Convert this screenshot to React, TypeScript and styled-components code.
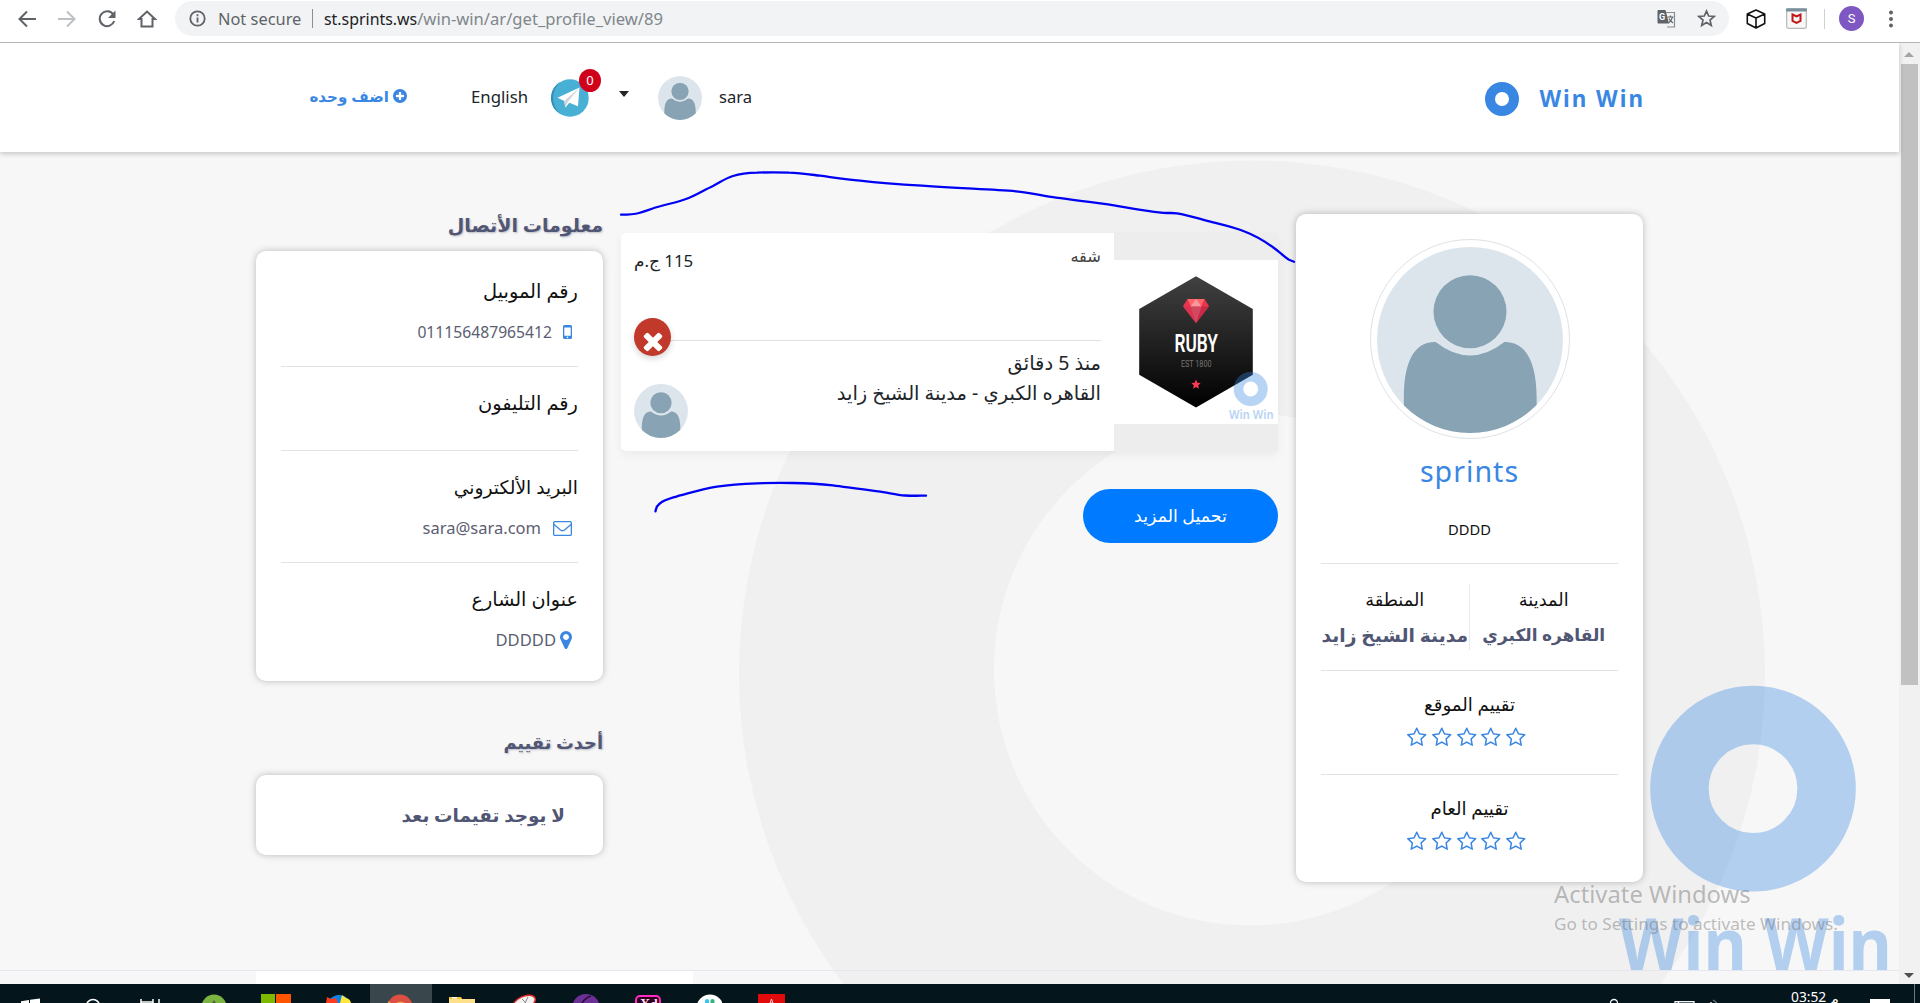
import React from 'react';
import styled, { createGlobalStyle } from 'styled-components';

const BLUE = '#3a87e3';
const INK = '#505673';
const latin = '"Noto Sans", "DejaVu Sans", sans-serif';

const Global = createGlobalStyle`
  * { box-sizing: border-box; }
  html, body { margin: 0; padding: 0; overflow: hidden; }
  body { font-family: ${latin}; background: #f7f7f7; color: #212529; }
  svg { display: block; flex: none; }
`;

const Screen = styled.div`
  width: 1920px;
  height: 1003px;
  display: flex;
  flex-direction: column;
  overflow: hidden;
  position: relative;
`;

/* ---------- browser chrome ---------- */
const Toolbar = styled.div`
  height: 43px;
  flex: none;
  display: flex;
  align-items: flex-start;
  background: #fff;
  border-bottom: 1px solid #b4b5b7;
`;
const NavButtons = styled.div`
  width: 175px;
  height: 37px;
  padding-left: 17px;
  display: flex;
  align-items: center;
  gap: 20px;
`;
const Omnibox = styled.div`
  width: 1554px;
  height: 35px;
  margin-top: 1px;
  border-radius: 18px;
  background: #f1f3f4;
  display: flex;
  align-items: center;
  padding: 0 13px 0 14px;
  white-space: nowrap;
`;
const Security = styled.span`
  margin-left: 12px;
  width: 94px;
  flex: none;
  font-size: 16.4px;
  color: #5f6368;
`;
const Divider = styled.span<{ $h: number; $color: string }>`
  width: 1px;
  height: ${p => p.$h}px;
  background: ${p => p.$color};
`;
const Address = styled.span`
  margin-left: 11px;
  flex: 1;
  font-size: 16.6px;
  color: #80868b;
`;
const Host = styled.span`
  color: #202124;
  font-size: 15.9px;
`;
const OmniIcons = styled.div`
  display: flex;
  align-items: center;
  gap: 21px;
`;
const Extensions = styled.div`
  height: 37px;
  flex: 1;
  display: flex;
  align-items: center;
  padding-left: 17px;
`;
const Account = styled.div`
  width: 25px;
  height: 25px;
  margin: 0 25px 0 14px;
  border-radius: 50%;
  background: #7e57c2;
  color: #fff;
  font: 13px/25px Roboto, sans-serif;
  text-align: center;
`;

/* ---------- page frame ---------- */
const Viewport = styled.div`
  height: 941px;
  flex: none;
  display: flex;
  overflow: hidden;
`;
const Page = styled.div`
  width: 1899px;
  position: relative;
  display: flex;
  flex-direction: column;
  background: #f7f7f7;
`;
const Backdrop = styled.svg`
  position: absolute;
  left: 0;
  top: 0;
`;
const Scrollbar = styled.div`
  width: 21px;
  background: #f1f1f1;
  display: flex;
  flex-direction: column;
  align-items: center;
  justify-content: space-between;
  padding-bottom: 6px;
  padding-right: 1px;
`;
const ScrollTop = styled.div`
  display: flex;
  flex-direction: column;
  align-items: center;
  padding-top: 9px;
  gap: 7px;
`;
const Thumb = styled.div`
  width: 17px;
  height: 621px;
  background: #c1c1c1;
`;

/* ---------- site header ---------- */
const Header = styled.header`
  height: 109px;
  flex: none;
  background: #fff;
  box-shadow: 0 2px 5px rgba(0, 0, 0, 0.2);
  display: flex;
  align-items: center;
  padding: 0 254px 0 309px;
  position: relative;
`;
const AddUnit = styled.a`
  display: flex;
  align-items: center;
  gap: 4px;
  width: 98px;
  padding-bottom: 3px;
  direction: rtl;
  color: ${BLUE};
  font-weight: 700;
  font-size: 15.1px;
  white-space: nowrap;
`;
const Language = styled.span`
  margin: 0 22px 2px 64px;
  font-size: 16.8px;
  width: 58px;
`;
const Messages = styled.div`
  position: relative;
  width: 38px;
  height: 38px;
`;
const Badge = styled.span`
  position: absolute;
  left: 28px;
  top: -10px;
  width: 22px;
  height: 23px;
  border-radius: 50%;
  background: #d0021b;
  color: #fff;
  font-size: 13px;
  line-height: 22px;
  text-align: center;
`;
const Caret = styled.span`
  margin: 0 29px 7px 30px;
  border: 5.5px solid transparent;
  border-top: 6px solid #212529;
  border-bottom: 0;
`;
const UserName = styled.span`
  margin: 0 0 3px 17px;
  font-size: 16.6px;
`;
const Brand = styled.div`
  margin-left: auto;
  display: flex;
  align-items: center;
  gap: 20px;
  color: ${BLUE};
  font-size: 22.4px;
  font-weight: 700;
  letter-spacing: 2px;
  padding-top: 2px;
`;

/* ---------- content ---------- */
const Columns = styled.main`
  display: flex;
  gap: 18px;
  height: 819px;
  flex: none;
  padding: 62px 256px 0;
  border-bottom: 1px solid #e6e7ee;
  position: relative;
`;
const Side = styled.aside`
  width: 347px;
  direction: rtl;
`;
const Center = styled.section`
  width: 657px;
  padding-top: 19px;
`;
const Heading = styled.h2<{ $size: number; $height: number }>`
  margin: 0;
  height: ${p => p.$height}px;
  font-size: ${p => p.$size}px;
  line-height: 23px;
  font-weight: 700;
  color: ${INK};
  text-shadow: 1px 1px 2px rgba(80, 86, 115, 0.35);
`;
const Card = styled.div`
  background: #fff;
  border-radius: 10px;
  box-shadow: 0 0 7px rgba(0, 0, 0, 0.25);
`;
const ContactCard = styled(Card)`
  height: 430px;
  padding: 4px 25px 0;
  margin-bottom: 50px;
`;
const Field = styled.div`
  padding: 21px 0 19px;
  border-bottom: 1px solid #e3e3e4;
  &:last-child { border-bottom: 0; }
`;
const FieldLabel = styled.div<{ $size: number }>`
  font-size: ${p => p.$size}px;
  line-height: 30px;
  color: #111;
`;
const FieldValue = styled.div<{ $size: number; $gap: number }>`
  margin-top: 11px;
  padding-right: 6px;
  min-height: 2px;
  display: flex;
  align-items: center;
  gap: ${p => p.$gap}px;
  font-size: ${p => p.$size}px;
  color: #5b5e72;
  & > span { line-height: 30px; }
`;
const EmptyCard = styled(Card)`
  height: 80px;
  padding-right: 38px;
  line-height: 80px;
  font-size: 18.4px;
  font-weight: 700;
  color: ${INK};
`;

/* ---------- listing ---------- */
const Listing = styled.article`
  height: 218px;
  display: flex;
  border-radius: 5px;
  box-shadow: 0 4px 10px rgba(0, 0, 0, 0.05);
`;
const ListingBody = styled.div`
  width: 493px;
  position: relative;
  padding: 0 13px;
  background: #fff;
  border-radius: 5px 0 0 5px;
`;
const ListingTop = styled.div`
  height: 108px;
  display: flex;
  justify-content: space-between;
  border-bottom: 1px solid #dfe0e1;
`;
const Price = styled.span`
  padding-top: 17px;
  font-size: 16.9px;
  line-height: 22px;
  direction: rtl;
`;
const Kind = styled.span`
  padding-top: 12px;
  font-size: 16.3px;
  line-height: 22px;
  color: #444;
`;
const ListingBottom = styled.div`
  display: flex;
  justify-content: space-between;
  padding-top: 7px;
`;
const ListingInfo = styled.div`
  direction: rtl;
  font-size: 19.5px;
  line-height: 30px;
`;
const OwnerSlot = styled.div`
  padding-top: 36px;
`;
const Remove = styled.button`
  position: absolute;
  left: 13px;
  top: 85px;
  width: 37px;
  height: 38px;
  padding: 7px 0 0;
  border: 0;
  border-radius: 50%;
  background: #c0392b;
  color: #fff;
  display: flex;
  align-items: center;
  justify-content: center;
  box-shadow: 0 3px 6px rgba(0, 0, 0, 0.16);
`;
const Media = styled.div`
  width: 164px;
  display: flex;
  align-items: center;
  background: #ededed;
`;
const LoadMore = styled.button`
  display: block;
  width: 195px;
  height: 54px;
  margin: 38px 0 0 auto;
  padding: 0 0 3px;
  border: 0;
  border-radius: 27px;
  background: #007bff;
  color: #fff;
  font-family: ${latin};
  font-size: 17.4px;
`;

/* ---------- profile ---------- */
const ProfileCard = styled(Card)`
  height: 668px;
  padding: 25px 25px 0;
  display: flex;
  flex-direction: column;
  align-items: center;
`;
const Portrait = styled.div`
  width: 200px;
  height: 200px;
  padding: 7px 6px 6px;
  border: 1px solid #dee2e6;
  border-radius: 50%;
`;
const ProfileName = styled.h1`
  margin: 12px 0 26px;
  font-size: 28.6px;
  line-height: 40px;
  font-weight: 400;
  letter-spacing: 1px;
  color: ${BLUE};
  direction: ltr;
`;
const Bio = styled.p`
  margin: 0 0 22px;
  font-size: 14.7px;
  line-height: 24px;
  color: #111;
`;
const Places = styled.div`
  width: 297px;
  padding: 20px 0;
  display: grid;
  grid-template-columns: 1fr 1fr;
  border-top: 1px solid #e3e3e4;
`;
const Place = styled.div`
  height: 66px;
  text-align: center;
  white-space: nowrap;
  &:last-child { border-right: 1px solid #ebebec; }
`;
const PlaceLabel = styled.div`
  font-size: 17.8px;
  line-height: 30px;
  margin-bottom: 5px;
  color: #111;
`;
const PlaceName = styled.div<{ $size: number }>`
  font-size: ${p => p.$size}px;
  line-height: 31px;
  font-weight: 700;
  color: ${INK};
`;
const Rating = styled.div`
  width: 297px;
  height: 104px;
  padding-top: 20px;
  text-align: center;
  font-size: 18.2px;
  line-height: 26px;
  color: #111;
  border-top: 1px solid #e3e3e4;
`;
const Stars = styled.div`
  display: flex;
  justify-content: center;
  gap: 3.8px;
  margin: 10px 5px 0 0;
  color: ${BLUE};
`;

/* ---------- footer, overlays, taskbar ---------- */
const FooterPanel = styled.div`
  width: 437px;
  height: 13px;
  margin-left: 256px;
  background: #fff;
  position: relative;
`;
const Overlay = styled.svg`
  position: absolute;
  left: 0;
  top: 0;
  pointer-events: none;
`;
const Activation = styled.div`
  position: absolute;
  left: 1554px;
  top: 878px;
  color: rgba(110, 110, 110, 0.45);
  white-space: nowrap;
`;
const ActivationTitle = styled.div`
  font-size: 23.8px;
  line-height: 32px;
`;
const ActivationHint = styled.div`
  font-size: 17.15px;
  line-height: 28px;
`;
const Taskbar = styled.footer`
  height: 19px;
  flex: none;
  display: flex;
  background: #04151b;
  overflow: hidden;
`;
const Task = styled.div<{ $active?: boolean }>`
  width: 61.7px;
  height: 19px;
  flex: none;
  overflow: hidden;
  display: flex;
  justify-content: center;
  background: ${p => (p.$active ? '#39474c' : 'transparent')};
`;
const Tray = styled.div`
  margin-left: auto;
  padding-right: 5px;
  display: flex;
  color: #fff;
`;
const TrayIcons = styled.div`
  padding-right: 74px;
`;
const Clock = styled.div`
  width: 79px;
  display: flex;
  font-size: 13.8px;
  line-height: 19px;
  padding-top: 3px;
  gap: 4px;
  white-space: nowrap;
`;
const Meridiem = styled.span`
  padding-top: 2px;
`;
const Notify = styled.div`
  width: 20px;
  height: 12px;
  margin: 15px 24px 0 0;
  background: #fff;
`;

/* ---------- icons ---------- */
const glyphs = {
  star: 'M1137 1004l306-297-422-62-189-382-189 382-422 62 306 297-73 421 378-199 377 199zm527-357q0 22-26 48l-363 354 86 500q1 7 1 20 0 50-41 50-19 0-40-12l-449-236-449 236q-22 12-40 12-21 0-31.5-14.5t-10.5-35.5q0-6 2-20l86-500-364-354q-25-27-25-48 0-37 56-46l502-73 225-455q19-41 49-41t49 41l225 455 502 73q56 9 56 46z',
  plus: 'M1344 960v-128q0-26-19-45t-45-19h-256v-256q0-26-19-45t-45-19h-128q-26 0-45 19t-19 45v256h-256q-26 0-45 19t-19 45v128q0 26 19 45t45 19h256v256q0 26 19 45t45 19h128q26 0 45-19t19-45v-256h256q26 0 45-19t19-45zm320-64q0 209-103 385.5t-279.5 279.5-385.5 103-385.5-103-279.5-279.5-103-385.5 103-385.5 279.5-279.5 385.5-103 385.5 103 279.5 279.5 103 385.5z',
  pin: 'M1152 640q0-106-75-181t-181-75-181 75-75 181 75 181 181 75 181-75 75-181zm256 0q0 109-33 179l-364 774q-16 33-47.5 52t-67.5 19-67.5-19-46.5-52l-365-774q-33-70-33-179 0-212 150-362t362-150 362 150 150 362z',
  times: 'M1490 1322q0 40-28 68l-136 136q-28 28-68 28t-68-28l-294-294-294 294q-28 28-68 28t-68-28l-136-136q-28-28-28-68t28-68l294-294-294-294q-28-28-28-68t28-68l136-136q28-28 68-28t68 28l294 294 294-294q28-28 68-28t68 28l136 136q28 28 28 68t-28 68l-294 294 294 294q28 28 28 68z',
};
const Glyph = ({ name, w, h = w, box = '128 128 1536 1536' }: { name: keyof typeof glyphs; w: number; h?: number; box?: string }) => (
  <svg width={w} height={h} viewBox={box} fill="currentColor"><path d={glyphs[name]} /></svg>
);

const Avatar = ({ size, id }: { size: number; id: string }) => (
  <svg width={size} height={size} viewBox="0 0 187 187">
    <clipPath id={id}><circle cx="93.5" cy="93.5" r="93.5" /></clipPath>
    <g clipPath={`url(#${id})`}>
      <rect width="187" height="187" fill="#dde5ec" />
      <circle cx="93.5" cy="65" r="36.7" fill="#88a4b4" />
      <path d="M27 187V152C27 118 36 95 59 95.500Q76 109 93.500 109Q111 109 128 95.500C151 95 160.500 118 160.500 152V187Z" fill="#88a4b4" />
    </g>
  </svg>
);

const Ring = () => (
  <svg width="34" height="34" viewBox="0 0 34 34"><circle cx="17" cy="17" r="12" fill="none" stroke={BLUE} strokeWidth="10" /></svg>
);

const Telegram = () => (
  <svg width="38" height="38" viewBox="0 0 38 38">
    <circle cx="19" cy="19" r="18.7" fill="#49b0d5" />
    <path d="M9 3A18.700 18.700 0 0 0 9 35A22 22 0 0 1 9 3Z" fill="#2f8fb4" />
    <path d="M6.500 18.800 28.500 8.500 27 27.200 18.300 23.700 14.300 28.700 13.300 22Z" fill="#fff" />
    <path d="M13.300 22 28.500 8.500 16.300 23.500 14.300 28.700Z" fill="#cfd5da" />
  </svg>
);

const Phone = () => (
  <svg width="9" height="14" viewBox="0 0 9 14">
    <path fillRule="evenodd" fill={BLUE} d="M1.500 0h6A1.500 1.500 0 0 1 9 1.500v11A1.500 1.500 0 0 1 7.500 14h-6A1.500 1.500 0 0 1 0 12.500v-11A1.500 1.500 0 0 1 1.500 0ZM1.300 2.500v8.300h6.400V2.500ZM4.500 11.600a.8.800 0 1 0 0 1.600.8.800 0 1 0 0-1.600Z" />
  </svg>
);
const Envelope = () => (
  <svg width="19" height="15" viewBox="0 0 19 15" fill="none" stroke={BLUE} strokeWidth="1.300">
    <rect x=".65" y=".65" width="17.700" height="13.700" rx="1.200" />
    <path d="M.8 3.200 7.500 8.900Q9.500 10.400 11.500 8.900L18.200 3.200" />
  </svg>
);

const RubyBadge = () => (
  <svg width="164" height="164" viewBox="0 0 164 164">
    <defs>
      <linearGradient id="hex" x1="0" y1="0" x2="0" y2="1">
        <stop offset="0" stopColor="#414141" /><stop offset="1" stopColor="#000" />
      </linearGradient>
    </defs>
    <rect width="164" height="164" fill="#fff" />
    <path d="M82 16.300 138.800 49V114.700L82 147.400 25.200 114.700V49Z" fill="url(#hex)" />
    <path d="M73.500 39h17L95 46 82 63 69 46Z" fill="#e8354f" />
    <path d="M73.500 39h17L87 46.500H77Z" fill="#ff6468" />
    <path d="M82 39 87.500 46.500h-11Z" fill="#f79a9c" />
    <path d="M69 46.500H76.500L82 63Z" fill="#d9334d" /><path d="M95 46.500H87.500L82 63Z" fill="#c92b47" />
    <path d="M76.500 46.500h11L82 63Z" fill="#d24860" />
    <text x="60.500" y="92" fontFamily="Roboto, sans-serif" fontWeight="600" fontSize="26.500" fill="#fff" textLength="43.500" lengthAdjust="spacingAndGlyphs">RUBY</text>
    <text x="67" y="107" fontFamily="Roboto, sans-serif" fontSize="9.800" fill="#777" textLength="30.500" lengthAdjust="spacingAndGlyphs">EST 1800</text>
    <path d="M82 119.500 83.400 122.700 86.600 123 84.200 125.400 84.900 128.800 82 127.100 79.100 128.800 79.800 125.400 77.400 123 80.600 122.700Z" fill="#ff3b52" />
    <circle cx="136.700" cy="129" r="12.200" fill="none" stroke="#3a87e3" strokeOpacity=".36" strokeWidth="9.600" />
    <text x="115" y="158.500" fontFamily={latin} fontWeight="700" fontSize="12" fill="#3a87e3" fillOpacity=".36" textLength="44.500" lengthAdjust="spacingAndGlyphs">Win Win</text>
  </svg>
);

const FiveStars = () => (
  <Stars>{[0, 1, 2, 3, 4].map(i => <Glyph key={i} name="star" w={21} box="0 0 1792 1792" />)}</Stars>
);

const taskIcons: React.ReactNode[] = [
  <svg width="22" height="19"><path d="M1 17.300 9 16v8H1ZM10 15.800 20 14.500V24H10Z" fill="#fff" /></svg>,
  <svg width="20" height="19"><circle cx="10" cy="22" r="6.500" fill="none" stroke="#fff" strokeWidth="1.500" /></svg>,
  <svg width="30" height="19"><path d="M2 15v5M2 18h12M14 15v5M20 15v5" fill="none" stroke="#fff" strokeWidth="1.500" /></svg>,
  <svg width="30" height="19"><circle cx="13" cy="23" r="12.500" fill="#7cb342" /><path d="m11 19 2-3 2 3Z" fill="#50652f" /></svg>,
  <svg width="34" height="19"><path d="M0 10h14v9H0Z" fill="#7eb900" /><path d="M15 10h15v9H15Z" fill="#ff5400" /></svg>,
  <svg width="28" height="19"><circle cx="14" cy="23" r="12" fill="#0d85e8" /><path d="m1 19 1-6 4 2 5-1 2 5Z" fill="#ff3b1f" /><path d="m15 19 2-8 4 3q5 1 5 6Z" fill="#ffe63b" /></svg>,
  <svg width="28" height="19"><circle cx="13" cy="23" r="12.500" fill="#dd4f42" /><path d="M1 19V17l3 2M9 19q4-3 9 0Z" fill="#e9a64d" /></svg>,
  <svg width="30" height="19"><path d="M1 13h12l1 2h13v5H1Z" fill="#ffe08a" /><path d="M1 13h12v2H1Z" fill="#f6c437" /><path d="M4 13h5v1.500H4Z" fill="#fff" /></svg>,
  <svg width="28" height="19"><ellipse cx="14" cy="19" rx="12" ry="6.500" transform="rotate(-25 14 19)" fill="#f2f2f2" stroke="#e02b2b" strokeWidth="1.500" /><path d="m12 15 4 4M18 13l-3 6" stroke="#888" /></svg>,
  <svg width="28" height="19"><circle cx="14" cy="24" r="14" fill="#6b2f95" /><path d="M10 19q3-5 9-7" fill="none" stroke="#241038" strokeWidth="1.500" /></svg>,
  <svg width="26" height="19"><rect x="1" y="12" width="24" height="24" rx="4" fill="#2e001e" stroke="#ff2bc2" strokeWidth="2" /><text x="5" y="25" fill="#ffd9f3" fontFamily="Liberation Serif, serif" fontWeight="700" fontSize="14">Xd</text></svg>,
  <svg width="26" height="19"><circle cx="14" cy="24" r="13.500" fill="#fff" /><rect x="9" y="15" width="4" height="6" rx="2" fill="#36c5f0" /><rect x="14.500" y="15" width="4" height="6" rx="2" fill="#2eb67d" /></svg>,
  <svg width="27" height="19"><path d="M0 10h27v9H0Z" fill="#e20a0a" /><path d="m13.500 15-1.500 4h3Z" fill="none" stroke="#fff" strokeWidth=".8" /></svg>,
];

export default function App() {
  return (
    <Screen>
      <Global />
      <Toolbar>
        <NavButtons>
          <svg width="20" height="20" viewBox="0 0 20 20" fill="none" stroke="#5f6368" strokeWidth="2"><path d="M19 10H3M10 2.500 2.500 10 10 17.500" /></svg>
          <svg width="20" height="20" viewBox="0 0 20 20" fill="none" stroke="#bdc1c6" strokeWidth="2"><path d="M1 10H17M10 2.500 17.500 10 10 17.500" /></svg>
          <svg width="20" height="20" viewBox="0 0 20 20"><path d="M16.300 5.600A7.400 7.400 0 1 0 17.200 12" fill="none" stroke="#5f6368" strokeWidth="2" /><path d="M18.500 1.500V9H11Z" fill="#5f6368" /></svg>
          <svg width="20" height="20" viewBox="0 0 20 20" fill="none" stroke="#5f6368" strokeWidth="2"><path d="M4.500 17.500V10H2L10 2.500 18 10H15.500V17.500Z" /></svg>
        </NavButtons>
        <Omnibox>
          <svg width="17" height="17" viewBox="0 0 17 17"><circle cx="8.500" cy="8.500" r="7.200" fill="none" stroke="#5f6368" strokeWidth="1.800" /><path d="M7.600 7.500h1.800v5H7.600zM7.600 4.300h1.800v1.900H7.600z" fill="#5f6368" /></svg>
          <Security>Not secure</Security>
          <Divider $h={19} $color="#8b8f93" />
          <Address><Host>st.sprints.ws</Host>/win-win/ar/get_profile_view/89</Address>
          <OmniIcons>
            <svg width="19" height="19" viewBox="0 0 19 19">
              <path d="M7 3.500h10.500V18H10" fill="#f1f3f4" stroke="#8a8d91" strokeWidth="1.200" />
              <path d="M1.500 1H8.500L12 14.500H1.500A1 1 0 0 1 .5 13.500V2A1 1 0 0 1 1.500 1Z" fill="#5f6368" />
              <text x="2" y="11" fontFamily="Roboto, sans-serif" fontWeight="700" fontSize="9" fill="#fff">G</text>
              <path d="M10.500 8H16.500M13.500 6.500V8M15.500 8Q14.500 12 11.500 14M12 9.500Q13 12 16 14" fill="none" stroke="#5f6368" strokeWidth="1.100" />
            </svg>
            <svg width="19" height="19" viewBox="0 0 19 19" fill="none" stroke="#5f6368" strokeWidth="1.700"><path d="M9.500 2 11.700 7 17.200 7.500 13 11.100 14.300 16.500 9.500 13.600 4.700 16.500 6 11.100 1.800 7.500 7.300 7Z" /></svg>
          </OmniIcons>
        </Omnibox>
        <Extensions>
          <svg width="20" height="20" viewBox="0 0 20 20" fill="none" stroke="#111" strokeWidth="1.600" strokeLinejoin="round"><path d="M10 1 18.700 5V14.500L10 19 1.300 14.500V5ZM1.300 5 10 9 18.700 5M10 9V19" /></svg>
          <svg width="58" height="21" viewBox="0 0 58 21">
            <rect x="20.700" y=".7" width="19.600" height="19.600" rx="1.500" fill="#f7f7f7" stroke="#b4b8ba" strokeWidth="1.200" />
            <path d="M20 .5h21V3.500H20Z" fill="#78909c" />
            <path d="M26.500 6.500 30.500 8.500 34.500 6.500V13L30.500 15 26.500 13Z" fill="none" stroke="#c01818" strokeWidth="2" />
          </svg>
          <Divider $h={20} $color="#cfd1d4" />
          <Account>S</Account>
          <svg width="4" height="18" fill="#5f6368"><circle cx="2" cy="2.500" r="2" /><circle cx="2" cy="9" r="2" /><circle cx="2" cy="15.500" r="2" /></svg>
        </Extensions>
      </Toolbar>

      <Viewport>
        <Page>
          <Backdrop width="1899" height="941">
            <circle cx="1252" cy="630.500" r="513" fill="#f0f0f0" />
            <circle cx="1250" cy="626.500" r="256" fill="#f7f7f7" />
          </Backdrop>
          <Header>
            <AddUnit><Glyph name="plus" w={14} /> اضف وحده</AddUnit>
            <Language>English</Language>
            <Messages><Telegram /><Badge>0</Badge></Messages>
            <Caret />
            <Avatar size={44} id="nav" />
            <UserName>sara</UserName>
            <Brand><Ring /><span>Win Win</span></Brand>
          </Header>

          <Columns>
            <Side>
              <Heading $size={19} $height={37}>معلومات الأتصال</Heading>
              <ContactCard>
                <Field>
                  <FieldLabel $size={19.4}>رقم الموبيل</FieldLabel>
                  <FieldValue $size={15.7} $gap={11}><Phone /><span>011156487965412</span></FieldValue>
                </Field>
                <Field>
                  <FieldLabel $size={19.4}>رقم التليفون</FieldLabel>
                  <FieldValue $size={16} $gap={0} />
                </Field>
                <Field>
                  <FieldLabel $size={18.7}>البريد الألكتروني</FieldLabel>
                  <FieldValue $size={16.5} $gap={12}><Envelope /><span>sara@sara.com</span></FieldValue>
                </Field>
                <Field>
                  <FieldLabel $size={19.2}>عنوان الشارع</FieldLabel>
                  <FieldValue $size={16.6} $gap={4}>
                    <svg width="12" height="18" viewBox="384 128 1024 1536" fill={BLUE}><path d={glyphs.pin} /></svg>
                    <span>DDDDD</span>
                  </FieldValue>
                </Field>
              </ContactCard>
              <Heading $size={17.8} $height={44}>أحدث تقييم</Heading>
              <EmptyCard>لا يوجد تقيمات بعد</EmptyCard>
            </Side>

            <Center>
              <Listing>
                <ListingBody>
                  <ListingTop>
                    <Price>115 ج.م</Price>
                    <Kind>شقه</Kind>
                  </ListingTop>
                  <Remove><Glyph name="times" w={28} box="0 0 1792 1792" /></Remove>
                  <ListingBottom>
                    <OwnerSlot><Avatar size={54} id="owner" /></OwnerSlot>
                    <ListingInfo>
                      <div>منذ 5 دقائق</div>
                      <div>القاهره الكبري - مدينة الشيخ زايد</div>
                    </ListingInfo>
                  </ListingBottom>
                </ListingBody>
                <Media><RubyBadge /></Media>
              </Listing>
              <LoadMore>تحميل المزيد</LoadMore>
            </Center>

            <Side>
              <ProfileCard>
                <Portrait><Avatar size={186} id="portrait" /></Portrait>
                <ProfileName>sprints</ProfileName>
                <Bio>DDDD</Bio>
                <Places>
                  <Place><PlaceLabel>المدينة</PlaceLabel><PlaceName $size={17}>القاهره الكبري</PlaceName></Place>
                  <Place><PlaceLabel>المنطقة</PlaceLabel><PlaceName $size={18.7}>مدينة الشيخ زايد</PlaceName></Place>
                </Places>
                <Rating>تقييم الموقع<FiveStars /></Rating>
                <Rating>تقييم العام<FiveStars /></Rating>
              </ProfileCard>
            </Side>
          </Columns>
          <FooterPanel />
        </Page>
        <Scrollbar>
          <ScrollTop>
            <svg width="10" height="5"><path d="M0 5 5 0 10 5Z" fill="#a3a3a3" /></svg>
            <Thumb />
          </ScrollTop>
          <svg width="10" height="5"><path d="M0 0H10L5 5Z" fill="#505050" /></svg>
        </Scrollbar>
      </Viewport>

      <Taskbar>
        {taskIcons.map((icon, i) => <Task key={i} $active={i === 6}>{icon}</Task>)}
        <Tray>
          <TrayIcons>
            <svg width="110" height="19" fill="none" stroke="#fff" strokeWidth="1.300">
              <circle cx="7" cy="19" r="3.500" /><rect x="68" y="17.700" width="19" height="10" /><path d="M71.500 18v3" /><path d="M104 18v2" /><path d="M106 16l4 3" stroke="#66757a" />
            </svg>
          </TrayIcons>
          <Clock><span>03:52</span><Meridiem>م</Meridiem></Clock>
          <Notify />
          <Divider $h={19} $color="#6b777b" />
        </Tray>
      </Taskbar>

      <Overlay width="1899" height="984">
        <circle cx="1753" cy="788.700" r="73.600" fill="none" stroke="#3a87e3" strokeOpacity=".36" strokeWidth="58.500" />
        <text x="1619" y="969.500" fontFamily={latin} fontWeight="700" fontSize="71.500" fill="#3a87e3" fillOpacity=".36" textLength="273" lengthAdjust="spacingAndGlyphs">Win Win</text>
        <g fill="none" stroke="#0000f5" strokeWidth="2.300" strokeLinecap="round" strokeLinejoin="round">
          <path d="M621 214.700C628 214.700 634 214.500 639 213C646 211 653 208 661 206C670 203.500 678 202 686 199C696 195.500 704 190 713 186C720 182.500 725 178.500 733 176C741 173.500 748 172.900 757 172.700C768 172.200 779 172.200 789 172.700C800 173 810 174.500 820 175.700C834 177.500 847 179.300 860 180.700C880 183 901 184.500 922 185.700C960 188.300 990 189.300 1016 191.300C1030 192.500 1043 196 1056 197.700C1076 200.500 1096 202.300 1114 205.300C1130 208 1146 211 1161 212.700C1167 213.500 1171 212.500 1177 213.300C1190 215.500 1201 219.500 1213 222.300C1224 225 1235 227.500 1244 231.300C1255 235.500 1265 241.500 1273 247.300C1279 251.500 1283 256 1289 259.700L1294 261.700" />
          <path d="M655.500 511.300C656 508 657 505.500 660 503.300C664 500 670 498.500 677 496.300C690 493 702 489 717 486.700C730 484.500 744 483.700 757 483.300C769 482.800 781 482.700 793 483C807 483.300 820 484 833 485.300C848 487.300 863 489.500 878 491.300C888 492.500 896 495 905 495.500C912 495.900 919 495.700 926 495.700" />
        </g>
      </Overlay>
      <Activation>
        <ActivationTitle>Activate Windows</ActivationTitle>
        <ActivationHint>Go to Settings to activate Windows.</ActivationHint>
      </Activation>
    </Screen>
  );
}
